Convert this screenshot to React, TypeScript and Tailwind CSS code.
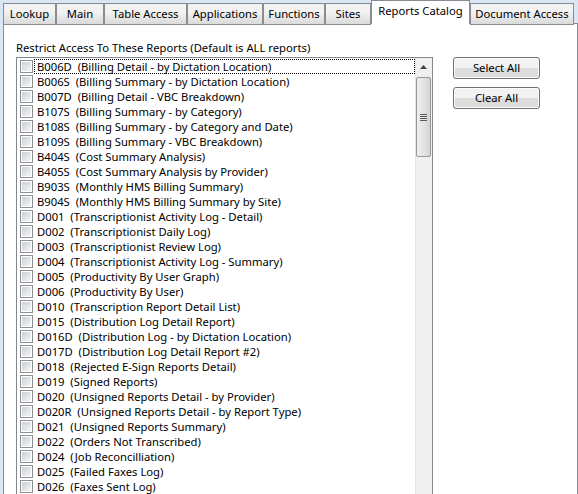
import React from 'react';

const tabs = [
    { label: 'Lookup', w: 'w-[53px]' },
    { label: 'Main', w: 'w-[48px]' },
    { label: 'Table Access', w: 'w-[83px]' },
    { label: 'Applications', w: 'w-[76px]' },
    { label: 'Functions', w: 'w-[62px]' },
    { label: 'Sites', w: 'w-[46px]' },
    { label: 'Reports Catalog', w: 'w-[99px]', active: true },
    { label: 'Document Access', w: 'w-[104px]' },
];

const reports: [string, string][] = [
    ['B006D', 'Billing Detail - by Dictation Location'],
    ['B006S', 'Billing Summary - by Dictation Location'],
    ['B007D', 'Billing Detail - VBC Breakdown'],
    ['B107S', 'Billing Summary - by Category'],
    ['B108S', 'Billing Summary - by Category and Date'],
    ['B109S', 'Billing Summary - VBC Breakdown'],
    ['B404S', 'Cost Summary Analysis'],
    ['B405S', 'Cost Summary Analysis by Provider'],
    ['B903S', 'Monthly HMS Billing Summary'],
    ['B904S', 'Monthly HMS Billing Summary by Site'],
    ['D001', 'Transcriptionist Activity Log - Detail'],
    ['D002', 'Transcriptionist Daily Log'],
    ['D003', 'Transcriptionist Review Log'],
    ['D004', 'Transcriptionist Activity Log - Summary'],
    ['D005', 'Productivity By User Graph'],
    ['D006', 'Productivity By User'],
    ['D010', 'Transcription Report Detail List'],
    ['D015', 'Distribution Log Detail Report'],
    ['D016D', 'Distribution Log - by Dictation Location'],
    ['D017D', 'Distribution Log Detail Report #2'],
    ['D018', 'Rejected E-Sign Reports Detail'],
    ['D019', 'Signed Reports'],
    ['D020', 'Unsigned Reports Detail - by Provider'],
    ['D020R', 'Unsigned Reports Detail - by Report Type'],
    ['D021', 'Unsigned Reports Summary'],
    ['D022', 'Orders Not Transcribed'],
    ['D024', 'Job Reconcilliation'],
    ['D025', 'Failed Faxes Log'],
    ['D026', 'Faxes Sent Log'],
];

function Checkbox() {
    return (
        <span className="box-border flex h-[13px] w-[13px] shrink-0 border border-[#8e8f8f] bg-white p-px">
            <span className="h-full w-full bg-gradient-to-br from-[#cbcfd5] to-[#f6f6f6]" />
        </span>
    );
}

function WinButton({ children }: { children: React.ReactNode }) {
    return (
        <button className="box-border h-[22px] w-[87px] rounded-[3px] border border-[#707070] bg-gradient-to-b from-[#f2f2f2] from-50% to-[#dcdcdc] to-50% text-[11.25px] leading-[14px] text-black shadow-[inset_0_0_0_1px_#fcfcfc]">
            {children}
        </button>
    );
}

function Scrollbar() {
    return (
        <div className="flex w-[17px] shrink-0 flex-col bg-[#f0f0f0] shadow-[inset_1px_0_0_#e3e3e3]">
            <div className="flex h-[17px] items-center justify-center">
                <svg width="7" height="4" viewBox="0 0 7 4">
                    <path d="M0 4 L3.5 0 L7 4 Z" fill="#444" />
                </svg>
            </div>
            <div className="mx-px mt-[2px] flex h-[80px] items-center justify-center rounded-[2px] border border-[#979797] bg-gradient-to-r from-[#f0f0f0] via-[#e4e4e4] to-[#d4d4d4]">
                <div className="flex flex-col gap-px">
                    <span className="h-px w-[7px] bg-[#5a5a5a]" />
                    <span className="h-px w-[7px] bg-[#5a5a5a]" />
                    <span className="h-px w-[7px] bg-[#5a5a5a]" />
                    <span className="h-px w-[7px] bg-[#5a5a5a]" />
                </div>
            </div>
            <div className="flex-1" />
        </div>
    );
}

export default function App() {
    return (
        <div className="flex h-[494px] w-[578px] flex-col overflow-hidden bg-[#dbe6f4] font-['Segoe_UI','Noto_Sans',sans-serif] text-[11.25px] leading-[14px] text-black">
            <div className="relative z-10 flex h-[24px] items-end pl-[3px]">
                {tabs.map((t) =>
                    t.active ? (
                        <div
                            key={t.label}
                            className={`${t.w} box-border flex h-[24px] items-start justify-center border border-b-0 border-[#898c95] bg-white pt-[3px]`}
                        >
                            {t.label}
                        </div>
                    ) : (
                        <div
                            key={t.label}
                            className={`${t.w} -mb-px box-border flex h-[22px] items-center justify-center border border-[#898c95] bg-gradient-to-b from-[#f2f2f2] from-40% to-[#dadada]`}
                        >
                            {t.label}
                        </div>
                    ),
                )}
            </div>
            <div className="-mt-px ml-[3px] flex flex-1 border border-[#898c95] bg-white pl-[12px] pt-[16px]">
                <div className="flex flex-col">
                    <div className="h-[17px] pt-px">
                        Restrict Access To These Reports (Default is ALL reports)
                    </div>
                    <div className="flex h-[460px] w-[417px] border border-[#828790]">
                        <div className="flex-1 pl-[3px] pt-px">
                            {reports.map(([code, name], i) => (
                                <div key={code} className="flex h-[15px] items-center">
                                    <Checkbox />
                                    <span
                                        className={`ml-px box-border flex h-[15px] flex-1 items-center whitespace-pre pl-[2px] leading-[13px] ${
                                            i === 0 ? 'border border-dotted border-black' : 'border border-transparent'
                                        }`}
                                    >
                                        {`${code}  (${name})`}
                                    </span>
                                </div>
                            ))}
                        </div>
                        <Scrollbar />
                    </div>
                </div>
                <div className="ml-[20px] mt-[17px] flex flex-col gap-[8px]">
                    <WinButton>Select All</WinButton>
                    <WinButton>Clear All</WinButton>
                </div>
            </div>
        </div>
    );
}
